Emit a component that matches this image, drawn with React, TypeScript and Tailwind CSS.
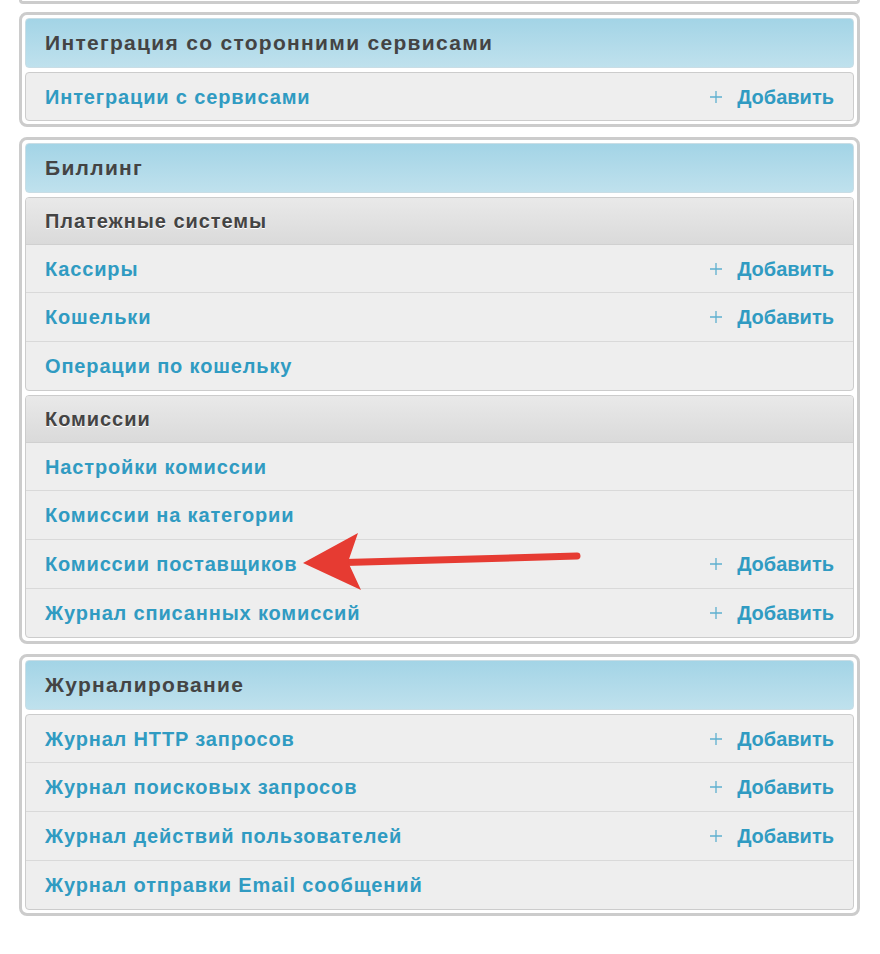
import React from 'react';

type Row = { name: string; add?: boolean };
type Group = { title?: string; rows: Row[] };
type Section = { title: string; groups: Group[] };

const sections: Section[] = [
  {
    title: 'Интеграция со сторонними сервисами',
    groups: [{ rows: [{ name: 'Интеграции с сервисами', add: true }] }],
  },
  {
    title: 'Биллинг',
    groups: [
      {
        title: 'Платежные системы',
        rows: [
          { name: 'Кассиры', add: true },
          { name: 'Кошельки', add: true },
          { name: 'Операции по кошельку' },
        ],
      },
      {
        title: 'Комиссии',
        rows: [
          { name: 'Настройки комиссии' },
          { name: 'Комиссии на категории' },
          { name: 'Комиссии поставщиков', add: true },
          { name: 'Журнал списанных комиссий', add: true },
        ],
      },
    ],
  },
  {
    title: 'Журналирование',
    groups: [
      {
        rows: [
          { name: 'Журнал HTTP запросов', add: true },
          { name: 'Журнал поисковых запросов', add: true },
          { name: 'Журнал действий пользователей', add: true },
          { name: 'Журнал отправки Email сообщений' },
        ],
      },
    ],
  },
];

const PlusIcon = () => (
  <svg width="12" height="12" viewBox="0 0 12 12" className="shrink-0">
    <path d="M6 0v12M0 6h12" stroke="#5eb0cf" strokeWidth="1.3" fill="none" />
  </svg>
);

// красная стрелка поверх списка
const Arrow = () => (
  <svg className="absolute left-0 top-0 pointer-events-none" width="880" height="954" viewBox="0 0 880 954">
    <line x1="577" y1="556" x2="345" y2="562.5" stroke="#e63b32" strokeWidth="7" strokeLinecap="round" />
    <polygon points="303,563 358,533 348,562 361,590" fill="#e63b32" />
  </svg>
);

const RowItem = ({ row, first }: { row: Row; first: boolean }) => (
  <div
    className={`flex items-center justify-between px-[19px] ${
      first ? 'h-[47px]' : 'h-[49px] border-t border-[#d9d9d9]'
    }`}
  >
    <a className="text-[#309bc2] font-bold tracking-[0.85px]">{row.name}</a>
    {row.add && (
      <a className="flex items-center gap-[15px] text-[#309bc2] font-bold">
        <PlusIcon />
        Добавить
      </a>
    )}
  </div>
);

const App: React.FC = () => {
  return (
    <div
      className="relative w-[880px] h-[954px] bg-white text-[20px] overflow-hidden"
      style={{ fontFamily: '"Liberation Sans", Arial, sans-serif' }}
    >
      {/* хвост предыдущего блока */}
      <div className="mx-[19px] w-[841px] h-[4px] border-x-[3px] border-b-[3px] border-[#cccccc] rounded-b-[8px]" />

      <div className="flex flex-col gap-[10px] mt-[8px]">
        {sections.map((section) => (
          <div
            key={section.title}
            className="mx-[19px] w-[841px] border-[3px] border-[#cccccc] rounded-[8px] p-[3px] flex flex-col gap-[4px] bg-white"
          >
            <div className="h-[50px] flex items-center pl-[19px] rounded-[4px] border border-[#c9dde5] bg-gradient-to-b from-[#a3d4e6] to-[#bfe1ed] text-[21px] font-bold text-[#444444] tracking-[1.3px]">
              {section.title}
            </div>
            {section.groups.map((group, gi) => (
              <div key={gi} className="rounded-[4px] border border-[#cccccc] bg-[#eeeeee] overflow-hidden">
                {group.title && (
                  <div
                    className="h-[47px] flex items-center pl-[19px] bg-gradient-to-b from-[#e9e9e9] to-[#dadada] border-b border-[#d0d0d0] font-bold text-[#444444] tracking-[0.95px]"
                    style={{ textShadow: '0 1px 0 #ffffff' }}
                  >
                    {group.title}
                  </div>
                )}
                {group.rows.map((row, ri) => (
                  <RowItem key={row.name} row={row} first={ri === 0} />
                ))}
              </div>
            ))}
          </div>
        ))}
      </div>

      <Arrow />
    </div>
  );
};

export default App;
